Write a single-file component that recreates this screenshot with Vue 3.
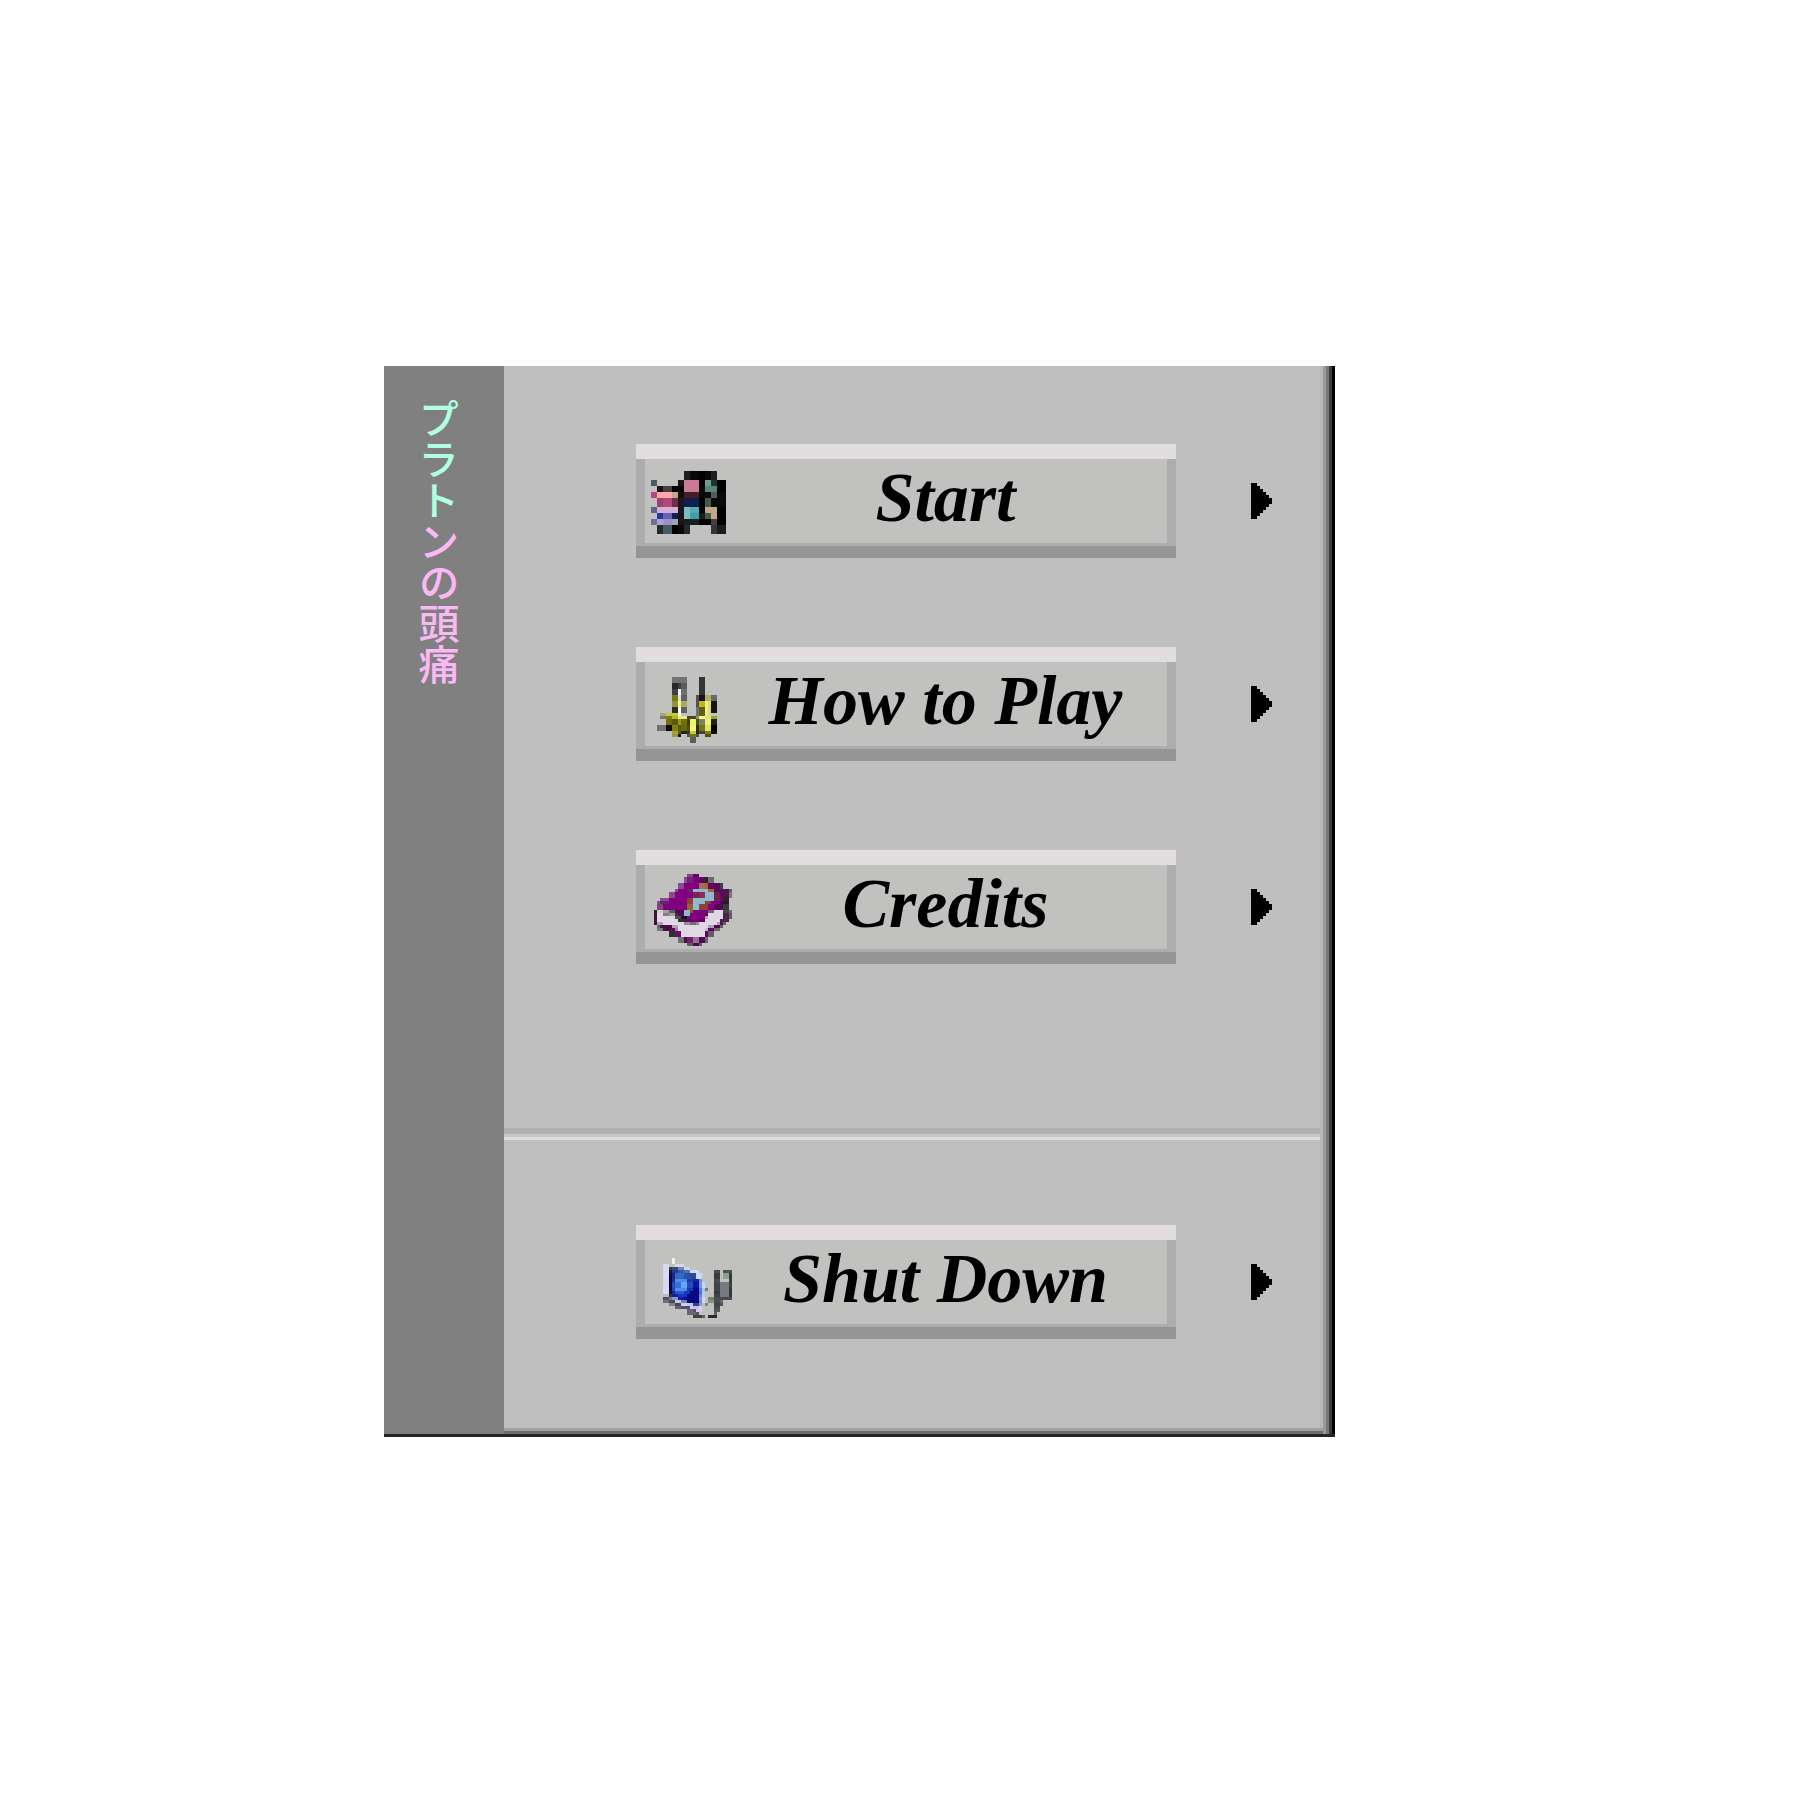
<script setup>
// Each sprite row: "top height | x width colour, ..." on a 30 x 28 grid
const flag = [
  '4 3|13 2 1b201f,15 3 060a0a,18 2 000000,20 2 060a0a,22 2 1b201f',
  '7 2|2 2 455a62,11 2 1e1216,13 5 cb7999,18 2 000000,20 2 6b9e90,22 2 1d3830,24 3 000000',
  '9 2|4 2 1e1216,6 3 483e41,9 4 000000,13 5 cb7999,18 2 060a0a,20 4 56877a,24 3 000000',
  '11 2|2 2 b4487c,4 5 faa8a8,9 2 bfa88c,11 2 150c10,13 5 431c24,18 4 060a0a,22 2 5a5a5a,24 3 060a0a',
  '13 3|4 2 9c4070,6 3 b04878,9 2 6f2f4c,11 2 171a1b,13 5 101e50,18 2 000000,20 2 425a46,22 5 060a0a',
  '16 2|2 2 67608f,4 7 d4b0d4,11 2 171a1b,13 2 78bcc6,15 3 58aab8,18 2 000000,20 4 bfa88c,24 3 000000',
  '18 2|4 2 203898,6 3 6662b0,9 2 142050,11 2 1e1216,13 2 78bcc6,15 3 449ca4,18 2 171f1d,20 2 425a46,22 2 bfa88c,24 3 000000',
  '20 2|2 2 726e9c,4 2 aaa4d0,6 3 a090c8,9 2 9ca2b8,11 2 1e1216,13 5 171f1d,18 4 000000,22 2 483e41,24 3 000000',
  '22 3|4 2 24292a,6 3 455a62,9 2 000000,11 2 060a0a,13 2 24292a,22 2 36363a,24 3 171f1d'
]
const tools = [
  '5 2|9 5 727272,18 2 343434',
  '7 2|9 2 282828,11 1 404040,12 2 5c5c5c,18 2 343434',
  '9 2|9 2 404040,11 1 f0f0f0,12 2 707070,18 2 343434',
  '11 2|9 2 78780c,11 1 e0e0d8,12 2 606060,17 1 505050,18 2 141414,20 2 b0b058,22 2 686868',
  '13 2|9 2 909048,11 1 f4f478,12 2 a8a868,17 1 505050,18 2 c0b818,20 1 f0f078,21 1 d8d890,22 2 141414',
  '15 2|9 2 2c3008,11 1 ffffff,12 2 606060,17 1 707070,18 2 606008,20 1 f0f078,21 1 d8d890,22 2 141414',
  '17 1|5 2 a8a868,7 4 c8c838,11 1 ffffff,17 1 707070,18 2 606008,20 1 f0f078,21 1 d8d890',
  '18 1|5 2 787878,7 2 808008,9 2 b8b820,11 1 f0f070,12 2 e8e8a0,14 3 484828,17 1 909060,18 2 f8f888,20 2 e0e090,22 2 a0a020',
  '19 2|7 2 707008,9 2 585808,11 1 989818,12 2 707008,14 1 404010,15 2 f0f078,17 1 505010,18 2 808060,20 2 f0f078,22 2 202020',
  '21 2|4 3 747474,7 2 0c0c0c,9 2 808010,11 1 585808,12 2 686808,14 1 505008,15 2 f4f478,17 1 303010,18 2 787808,20 2 e0e070,22 2 000000',
  '23 1|9 2 a8a820,11 1 606008,12 2 202020,14 1 404008,15 2 c8c848,17 1 202020,18 2 404040,20 2 808010,22 2 101010',
  '24 1|9 2 989850,11 1 181818,14 1 505050,15 2 787808,17 1 505050,20 2 505008',
  '25 2|15 2 5c5c5c'
]
const book = [
  '3 1|14 2 8c3c90,16 2 600860',
  '4 2|13 1 8c4890,14 2 782078,16 2 800080,18 2 600860,20 1 2c2030,21 2 6c6c6c',
  '6 2|11 2 8c4890,13 5 800080,18 2 a86c50,20 1 b06030,21 2 600860,23 2 501050,25 1 404040',
  '8 1|10 1 8c4890,11 3 800080,14 2 782060,16 5 8cbccc,21 2 b06030,23 3 600860,26 2 481848,28 1 606060',
  '9 2|8 2 8c4890,10 6 800080,16 2 782060,18 2 902858,20 3 8cbccc,23 2 702050,25 1 600860,26 2 481848,28 1 787878',
  '11 1|5 3 8c4890,8 6 800080,14 2 904038,16 7 8cbccc,23 2 702050,25 1 700870,26 2 282428',
  '12 1|4 1 8c4890,5 3 702070,8 6 800080,14 2 904038,16 4 8cbccc,20 2 904038,22 3 800080,25 1 500850,26 2 202020',
  '13 2|4 2 784878,6 8 800080,14 2 986030,16 2 8cbccc,18 3 904038,21 2 800080,23 3 500850,26 2 383838',
  '15 1|3 1 401040,4 2 d8c8d8,6 2 a0a0a0,8 2 606060,10 3 500850,13 2 8cbccc,15 1 906018,16 5 800080,21 2 786078,23 3 e0d8e4,26 2 484848,28 1 707070',
  '16 1|3 1 401040,4 2 e0d8e4,6 2 808080,8 2 a0a0a0,10 1 383838,11 2 600860,13 2 8cbccc,15 5 800080,20 1 402040,21 5 e0d8e4,26 2 502050,28 1 606060',
  '17 1|3 1 401040,4 6 e0d8e4,10 2 505050,12 2 181818,14 6 800080,20 1 b0a0b4,21 5 e0d8e4,26 2 502050,28 1 606060',
  '18 1|3 1 401040,4 7 e0d8e4,11 2 303030,13 2 600860,15 1 600860,16 2 800080,18 2 600860,20 5 e0d8e4,25 1 502050,26 2 502050',
  '19 1|3 1 401040,4 2 b0a0b4,6 7 e0d8e4,13 2 909090,15 2 707070,17 1 909090,18 6 e0d8e4,24 1 b0a0b4,25 1 402040,26 1 606060',
  '20 1|4 1 686868,5 2 401040,7 2 500850,9 2 b0a0b4,11 10 e0d8e4,21 2 b0a0b4,23 2 500850,25 1 606060',
  '21 1|4 2 787878,6 2 401040,8 2 600860,10 1 909090,11 9 e0d8e4,20 1 c8b8c8,21 2 600860,23 2 686868',
  '22 2|8 2 303030,10 2 700870,12 8 e0d8e4,20 1 600860,21 2 606060',
  '24 2|11 2 707070,13 1 500850,14 2 702070,16 2 987098,18 2 500850,20 1 686868',
  '26 1|14 2 606060,16 2 500850,18 1 606060'
]
const computer = [
  '6 2|9 1 f0f0f0',
  '8 1|6 2 d8d8f4,10 3 d8d8e4',
  '9 1|6 2 d8d8f4,8 1 303858,9 2 384880,11 2 7080b8,13 2 c8d8f4',
  '10 1|6 2 d8d8f4,8 1 101848,9 2 203898,11 2 3858a8,13 2 5870b0,15 3 d0d8f4,23 2 484c50,26 3 485848',
  '11 2|6 2 d8d8f4,8 1 080858,9 1 182888,10 3 3868c0,13 2 2850b0,15 2 304890,17 2 c8d8f8,23 2 383c40,26 2 90a090,28 1 304030',
  '13 1|6 2 d8d8f4,8 1 080858,9 1 183090,10 4 4890e8,14 2 1840a8,16 2 1028a0,18 1 708cc8,23 2 484c50,28 1 304030',
  '14 2|6 2 d8d8f4,8 1 080858,9 1 2050b8,10 2 3870d8,12 2 68a8f0,14 2 2848c0,16 2 0818a0,18 1 7898d8,19 1 c8d8f4,23 2 404448,25 3 787880,28 1 384048',
  '16 1|6 2 e0d8f8,8 1 080858,9 1 2048b0,10 4 4890e8,14 2 1838b0,16 2 080890,18 1 5880d0,19 1 a8c8f0,20 1 708078,23 2 404448,25 3 787880,28 1 303838',
  '17 1|6 2 e0d8f8,8 1 101040,9 1 1028a0,10 3 2858d8,13 2 1838c0,15 3 080880,18 1 5070b8,19 1 b0c8f0,23 2 383840,25 3 787880,28 1 303838',
  '18 1|6 2 b8b8d0,8 1 303040,9 2 1020a0,11 3 1038c0,14 4 080880,18 1 6888c8,19 1 b8d0f0,23 2 404448,25 3 787880,28 1 383838',
  '19 1|6 2 505060,8 1 707890,9 2 8898d0,11 2 102098,13 5 080880,18 1 8098d0,19 1 c8d8f4,21 2 788068,23 2 484c50,25 4 484c50',
  '20 1|6 2 707078,8 2 484858,10 2 c8c8f0,12 2 7080c0,14 4 080878,18 1 7888c0,19 1 d0d8f0,21 2 889078,23 2 484c50,25 1 686870',
  '21 1|8 2 808088,10 2 484858,12 2 d0d0f4,14 2 c0c8f0,16 2 304090,18 1 9098d0,20 1 808870,23 2 404448,25 1 505458',
  '22 1|10 2 606070,12 3 505060,15 1 d8c8f0,16 2 c8c0e8,18 1 d8d0f0,23 2 484c50',
  '23 1|14 2 686478,16 1 585068,17 2 d8c8f0,23 2 505458',
  '24 1|14 3 686478,17 1 585068,23 1 606468',
  '25 1|16 3 484040,19 1 686060,21 3 302828'
]

const toPixels = rows => rows.flatMap(row => {
  const [span, cells] = row.split('|')
  const [y, h] = span.split(' ').map(Number)
  return cells.split(',').map(cell => {
    const [x, w, fill] = cell.split(' ')
    return { x: +x, y, w: +w, h, fill: '#' + fill }
  })
})

const sections = [
  [
    { label: 'Start', pixels: toPixels(flag) },
    { label: 'How to Play', pixels: toPixels(tools) },
    { label: 'Credits', pixels: toPixels(book) }
  ],
  [{ label: 'Shut Down', pixels: toPixels(computer) }]
]
</script>

<template>
  <main class="desktop">
    <div class="window">
      <h1 class="banner" lang="ja"><span class="mint">プラト</span><span class="pink">ンの頭痛</span></h1>
      <nav class="menu" aria-label="Main menu">
        <ul v-for="(items, i) in sections" :key="i" class="section">
          <li v-for="item in items" :key="item.label" class="row">
            <button type="button" class="entry">
              <svg class="sprite" viewBox="0 0 30 28" shape-rendering="crispEdges" aria-hidden="true">
                <rect v-for="(p, n) in item.pixels" :key="n" :x="p.x" :y="p.y" :width="p.w" :height="p.h" :fill="p.fill" />
              </svg>
              <span class="label">{{ item.label }}</span>
            </button>
            <svg class="arrow" viewBox="0 0 7 12" shape-rendering="crispEdges" aria-hidden="true">
              <path d="M0 0H2V1H3V2H4V3H5V4H6V5H7V7H6V8H5V9H4V10H3V11H2V12H0Z" />
            </svg>
          </li>
        </ul>
      </nav>
    </div>
  </main>
</template>

<style>
body {
  background: #fff;
}
</style>

<style scoped>
.desktop {
  padding: 366px 24px 24px 384px;
}
.window {
  display: flex;
  max-width: 951px;
  box-sizing: border-box;
  border-bottom: 3px solid #242626;
  background: #bfbfbf;
  box-shadow: inset -3px 0 #000, inset -6px 0 #3c3c3c, inset -9px 0 #787878, inset -12px 0 #9a9a9a, inset -15px 0 #b8b8b8;
}
.banner {
  flex: 0 0 120px;
  box-sizing: border-box;
  margin: 0;
  padding: 32px 34px 0 0;
  background: #808080;
  writing-mode: vertical-rl;
  font: 500 41px/62px "Noto Sans CJK JP", sans-serif;
}
.mint {
  color: #b0ffe0;
}
.pink {
  color: #fab8f4;
}
.menu {
  flex: 1;
  min-width: 0;
  margin-right: 12px;
  box-shadow: inset 0 -3px #6e6e6e, inset 0 -6px #a0a0a0;
}
.section {
  display: flex;
  flex-direction: column;
  gap: 89px;
  margin: 0 3px 0 0;
  padding: 78px 48px 173px 132px;
  list-style: none;
}
.section + .section {
  padding: 85px 48px 95px 132px;
  border-top: 3px solid #dedede;
  box-shadow: 0 -3px #c6c6c6, 0 -9px #b0b0b0;
}
.row {
  display: flex;
  align-items: center;
  gap: 75px;
}
.entry {
  display: flex;
  align-items: flex-start;
  flex: 1;
  min-width: 0;
  height: 114px;
  padding: 15px 20px 15px 9px;
  border: 0;
  background: #c1c1bf;
  box-shadow: inset 0 15px #e2dedf, inset 0 -12px #959595, inset 9px -15px #adadad, inset -9px 0 #adadad;
  color: #000;
  cursor: pointer;
}
.sprite {
  flex: 0 0 90px;
  height: 84px;
}
.label {
  flex: 1;
  font: italic 700 70px/78px "Liberation Serif", serif;
  text-align: center;
  white-space: nowrap;
}
.arrow {
  flex: 0 0 21px;
  height: 36px;
}
</style>
